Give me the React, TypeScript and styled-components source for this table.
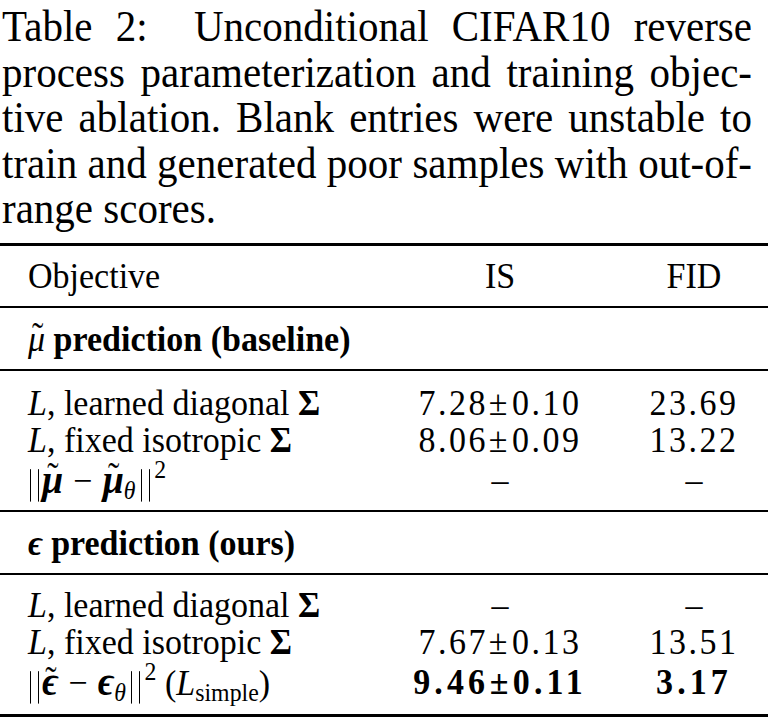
import React from "react";
import styled, { createGlobalStyle } from "styled-components";

const GlobalStyle = createGlobalStyle`
  html, body { margin: 0; padding: 0; background: #ffffff; }
  body {
    font-family: "Liberation Serif", "Times New Roman", "DejaVu Serif", serif;
    color: #000000;
  }
`;

const Page = styled.div`
  width: 768px;
  display: flex;
  flex-direction: column;
`;

const Caption = styled.div`
  padding: 4px 16px 0 2px;
  font-size: 41px;
  line-height: 45.5px;
  height: 243px;
  box-sizing: border-box;
`;

const CaptionLine = styled.div<{ $last?: boolean }>`
  text-align: justify;
  text-align-last: ${(p) => (p.$last ? "left" : "justify")};
  transform: scaleY(1.1);
`;

const Rule = styled.div<{ $thick?: boolean }>`
  height: ${(p) => (p.$thick ? 3 : 2)}px;
  background: #000000;
  width: 768px;
`;

const Row = styled.div<{ $h: number }>`
  display: grid;
  grid-template-columns: 352px 200px 148px;
  column-gap: 20px;
  padding-left: 28px;
  height: ${(p) => p.$h}px;
  align-items: center;
  font-size: 34px;
  line-height: 1;
  white-space: nowrap;
`;

const Group = styled.div<{ $top: number; $bottom: number }>`
  display: flex;
  flex-direction: column;
  padding-top: ${(p) => p.$top}px;
  padding-bottom: ${(p) => p.$bottom}px;
`;

const Cell = styled.div<{ $center?: boolean }>`
  text-align: ${(p) => (p.$center ? "center" : "left")};
  transform: scaleY(1.08);
`;

const SectionTitle = styled.span`
  font-weight: bold;
`;

const Var = styled.i<{ $bold?: boolean; $wide?: boolean }>`
  font-style: italic;
  font-weight: ${(p) => (p.$bold ? "bold" : "normal")};
  font-size: ${(p) => (p.$wide ? 1.12 : 1)}em;
`;

const BoldUp = styled.b`
  font-weight: bold;
`;

const Tilde = styled.span<{ $dx: number; $dy: number }>`
  position: relative;
  display: inline-block;
  &::after {
    content: "˜";
    position: absolute;
    left: ${(p) => p.$dx}em;
    top: ${(p) => p.$dy}em;
    font-style: normal;
    font-weight: normal;
    font-family: "Liberation Serif", serif;
  }
`;

const Num = styled.span<{ $bold?: boolean }>`
  letter-spacing: ${(p) => (p.$bold ? 0.12 : 0.075)}em;
  font-weight: ${(p) => (p.$bold ? "bold" : "normal")};
`;

const Pm = styled.span`
  margin: 0 0.08em 0 0.02em;
  letter-spacing: 0.05em;
`;

const Op = styled.span`
  margin: 0 0.3em;
`;

const Norm = styled.span`
  display: inline-block;
  box-sizing: border-box;
  width: 0.26em;
  height: 0.9em;
  border-left: 1.6px solid #000000;
  border-right: 1.6px solid #000000;
  vertical-align: -0.24em;
  margin: 0 0.1em 0 0.05em;
`;

const Sup = styled.sup`
  font-size: 0.7em;
  vertical-align: 0.6em;
  line-height: 0;
  margin-left: 0.04em;
`;

const Sub = styled.sub<{ $italic?: boolean }>`
  font-size: 0.7em;
  vertical-align: -0.25em;
  line-height: 0;
  font-style: ${(p) => (p.$italic ? "italic" : "normal")};
  margin-right: ${(p) => (p.$italic ? 0.16 : 0)}em;
`;

const Paren = styled.span`
  margin-left: 0.25em;
`;

const captionLines = [
  "Table 2:\u00a0 Unconditional CIFAR10 reverse",
  "process parameterization and training objec-",
  "tive ablation. Blank entries were unstable to",
  "train and generated poor samples with out-of-",
  "range scores.",
];

type Metric = { is: React.ReactNode; fid: React.ReactNode };

const ScoreIS = ({ a, b, bold }: { a: string; b: string; bold?: boolean }) => (
  <Num $bold={bold}>
    {a}
    <Pm>±</Pm>
    {b}
  </Num>
);

const dash = <span>–</span>;

const DataRow = ({ label, m, h }: { label: React.ReactNode; m: Metric; h: number }) => (
  <Row $h={h}>
    <Cell>{label}</Cell>
    <Cell $center>{m.is}</Cell>
    <Cell $center>{m.fid}</Cell>
  </Row>
);

const SectionRow = ({ children }: { children: React.ReactNode }) => (
  <Row $h={61}>
    <Cell>{children}</Cell>
    <Cell />
    <Cell />
  </Row>
);

const learned = (
  <>
    <Var>L</Var>, learned diagonal <BoldUp>Σ</BoldUp>
  </>
);
const fixed = (
  <>
    <Var>L</Var>, fixed isotropic <BoldUp>Σ</BoldUp>
  </>
);

export default function App() {
  return (
    <Page>
      <GlobalStyle />
      <Caption>
        {captionLines.map((l, i) => (
          <CaptionLine key={i} $last={i === captionLines.length - 1}>
            {l}
          </CaptionLine>
        ))}
      </Caption>
      <Rule $thick />
      <Row $h={60}>
        <Cell>Objective</Cell>
        <Cell $center>IS</Cell>
        <Cell $center>FID</Cell>
      </Row>
      <Rule />
      <SectionRow>
        <Tilde $dx={0.12} $dy={-0.08}>
          <Var>μ</Var>
        </Tilde>{" "}
        <SectionTitle>prediction (baseline)</SectionTitle>
      </SectionRow>
      <Rule />
      <Group $top={13} $bottom={9}>
        <DataRow h={37} label={learned} m={{ is: <ScoreIS a="7.28" b="0.10" />, fid: <Num>23.69</Num> }} />
        <DataRow h={38} label={fixed} m={{ is: <ScoreIS a="8.06" b="0.09" />, fid: <Num>13.22</Num> }} />
        <DataRow
          h={42}
          label={
            <>
              <Norm />
              <Tilde $dx={0.16} $dy={-0.04}>
                <Var $bold $wide>μ</Var>
              </Tilde>
              <Op>−</Op>
              <Tilde $dx={0.16} $dy={-0.04}>
                <Var $bold $wide>μ</Var>
              </Tilde>
              <Sub $italic>θ</Sub>
              <Norm />
              <Sup>2</Sup>
            </>
          }
          m={{ is: dash, fid: dash }}
        />
      </Group>
      <Rule />
      <SectionRow>
        <Var $bold>ϵ</Var> <SectionTitle>prediction (ours)</SectionTitle>
      </SectionRow>
      <Rule />
      <Group $top={11} $bottom={11}>
        <DataRow h={37} label={learned} m={{ is: dash, fid: dash }} />
        <DataRow h={38} label={fixed} m={{ is: <ScoreIS a="7.67" b="0.13" />, fid: <Num>13.51</Num> }} />
        <DataRow
          h={42}
          label={
            <>
              <Norm />
              <Tilde $dx={0.1} $dy={0.02}>
                <Var $bold $wide>ϵ</Var>
              </Tilde>
              <Op>−</Op>
              <Var $bold $wide>ϵ</Var>
              <Sub $italic>θ</Sub>
              <Norm />
              <Sup>2</Sup>
              <Paren>(</Paren>
              <Var>L</Var>
              <Sub>simple</Sub>)
            </>
          }
          m={{ is: <ScoreIS a="9.46" b="0.11" bold />, fid: <Num $bold>3.17</Num> }}
        />
      </Group>
      <Rule $thick />
    </Page>
  );
}
